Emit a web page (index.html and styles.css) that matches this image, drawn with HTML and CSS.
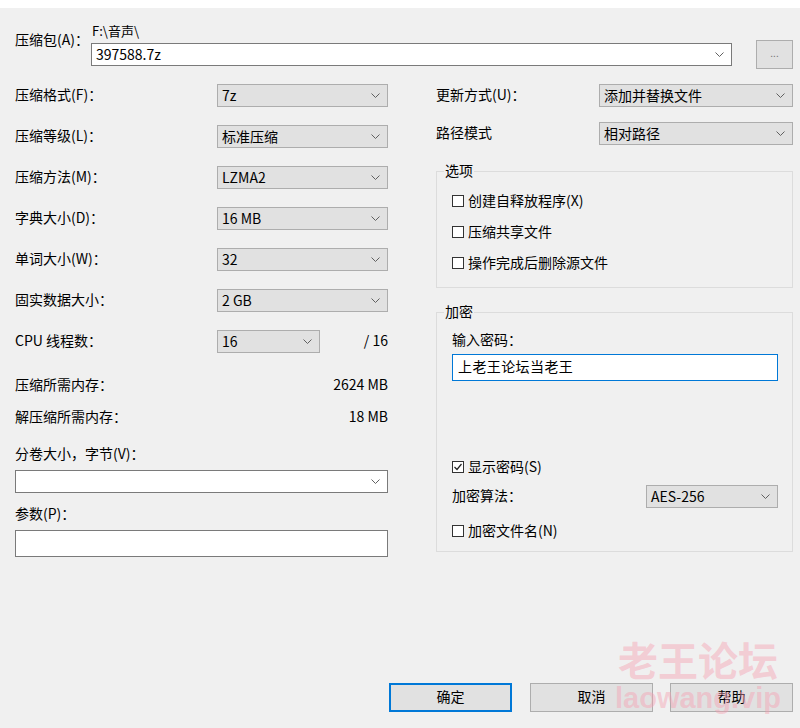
FILE: index.html
```html
<!DOCTYPE html>
<html lang="zh">
<head>
<meta charset="utf-8">
<title>添加到压缩包</title>
<link rel="stylesheet" href="styles.css">
</head>
<body>
<div class="strip"></div>
<main class="dialog">
  <div class="archive">
    <div class="archive-label">压缩包(A)：</div>
    <div class="archive-field">
      <div class="path">F:\音声\</div>
      <div class="combo white archive-combo"><span>397588.7z</span><svg class="chev" viewBox="0 0 9 5"><path d="M0.5 0.5 L4.5 4.5 L8.5 0.5"/></svg></div>
    </div>
    <div class="browse">...</div>
  </div>

  <div class="columns">
    <div class="left">
      <div class="row"><span>压缩格式(F)：</span><div class="combo"><span>7z</span><svg class="chev" viewBox="0 0 9 5"><path d="M0.5 0.5 L4.5 4.5 L8.5 0.5"/></svg></div></div>
      <div class="row"><span>压缩等级(L)：</span><div class="combo"><span>标准压缩</span><svg class="chev" viewBox="0 0 9 5"><path d="M0.5 0.5 L4.5 4.5 L8.5 0.5"/></svg></div></div>
      <div class="row"><span>压缩方法(M)：</span><div class="combo"><span>LZMA2</span><svg class="chev" viewBox="0 0 9 5"><path d="M0.5 0.5 L4.5 4.5 L8.5 0.5"/></svg></div></div>
      <div class="row"><span>字典大小(D)：</span><div class="combo"><span>16 MB</span><svg class="chev" viewBox="0 0 9 5"><path d="M0.5 0.5 L4.5 4.5 L8.5 0.5"/></svg></div></div>
      <div class="row"><span>单词大小(W)：</span><div class="combo"><span>32</span><svg class="chev" viewBox="0 0 9 5"><path d="M0.5 0.5 L4.5 4.5 L8.5 0.5"/></svg></div></div>
      <div class="row"><span>固实数据大小：</span><div class="combo"><span>2 GB</span><svg class="chev" viewBox="0 0 9 5"><path d="M0.5 0.5 L4.5 4.5 L8.5 0.5"/></svg></div></div>
      <div class="row cpu-row"><span>CPU 线程数：</span><div class="combo"><span>16</span><svg class="chev" viewBox="0 0 9 5"><path d="M0.5 0.5 L4.5 4.5 L8.5 0.5"/></svg></div><span class="cpu-max">/ 16</span></div>

      <div class="mem mem-first"><span>压缩所需内存：</span><span>2624 MB</span></div>
      <div class="mem mem-second"><span>解压缩所需内存：</span><span>18 MB</span></div>

      <div class="field-label split-label">分卷大小，字节(V)：</div>
      <div class="combo white full"><span></span><svg class="chev" viewBox="0 0 9 5"><path d="M0.5 0.5 L4.5 4.5 L8.5 0.5"/></svg></div>
      <div class="field-label param-label">参数(P)：</div>
      <div class="textbox"></div>
    </div>

    <div class="right">
      <div class="rrow"><span>更新方式(U)：</span><div class="combo"><span>添加并替换文件</span><svg class="chev" viewBox="0 0 9 5"><path d="M0.5 0.5 L4.5 4.5 L8.5 0.5"/></svg></div></div>
      <div class="rrow rrow-second"><span>路径模式</span><div class="combo"><span>相对路径</span><svg class="chev" viewBox="0 0 9 5"><path d="M0.5 0.5 L4.5 4.5 L8.5 0.5"/></svg></div></div>

      <fieldset class="group options">
        <legend>选项</legend>
        <div class="check"><span class="box"></span><span>创建自释放程序(X)</span></div>
        <div class="check"><span class="box"></span><span>压缩共享文件</span></div>
        <div class="check"><span class="box"></span><span>操作完成后删除源文件</span></div>
      </fieldset>

      <fieldset class="group encrypt">
        <legend>加密</legend>
        <div class="pw-label">输入密码：</div>
        <div class="password">上老王论坛当老王</div>
        <div class="check show-pw"><span class="box"><svg viewBox="0 0 10 10"><path d="M1.5 5 L4 7.5 L8.5 2"/></svg></span><span>显示密码(S)</span></div>
        <div class="algo"><span>加密算法：</span><div class="combo"><span>AES-256</span><svg class="chev" viewBox="0 0 9 5"><path d="M0.5 0.5 L4.5 4.5 L8.5 0.5"/></svg></div></div>
        <div class="check enc-names"><span class="box"></span><span>加密文件名(N)</span></div>
      </fieldset>
    </div>
  </div>

  <div class="footer">
    <div class="btn default">确定</div>
    <div class="btn">取消</div>
    <div class="btn">帮助</div>
  </div>
</main>
<div class="watermark">
  <div class="wm-cn">老王论坛</div>
  <div class="wm-en">laowang.vip</div>
</div>
</body>
</html>
```

FILE: styles.css
```css
* { box-sizing: border-box; }

html, body {
  margin: 0;
  padding: 0;
}

body {
  width: 800px;
  height: 728px;
  background: #f0f0f0;
  font-family: "Noto Sans CJK SC", "Noto Sans", sans-serif;
  font-size: 14px;
  line-height: 20px;
  color: #000;
  display: flex;
  flex-direction: column;
  position: relative;
  overflow: hidden;
}

.strip {
  height: 8px;
  background: #fff;
  flex: none;
}

.dialog {
  flex: 1;
  display: flex;
  flex-direction: column;
  padding: 14px 7px 16px 15px;
}

/* archive row */
.archive {
  display: flex;
  align-items: flex-start;
}

.archive-label {
  width: 76px;
  margin-top: 7px;
}

.archive-field {
  width: 641px;
}

.path {
  font-size: 13px;
  line-height: 18px;
  padding-left: 1px;
}

.archive-combo {
  margin-top: 3px;
}

.browse {
  margin-left: 24px;
  margin-top: 18px;
  width: 37px;
  height: 29px;
  background: #e1e1e1;
  border: 1px solid #adadad;
  color: #777;
  font-size: 10px;
  line-height: 24px;
  text-align: center;
}

/* combobox */
.combo {
  height: 23px;
  border: 1px solid #adadad;
  background: #e1e1e1;
  display: flex;
  align-items: center;
  justify-content: space-between;
  padding: 0 7px 2px 4px;
  line-height: 20px;
  white-space: nowrap;
}

.combo .chev {
  margin-top: 2px;
}

.combo.white {
  background: #fff;
  border-color: #7a7a7a;
}

.chev {
  width: 9px;
  height: 5px;
  flex: none;
  fill: none;
  stroke: #606060;
  stroke-width: 1;
}

/* columns */
.columns {
  display: flex;
  margin-top: 15px;
  gap: 48px;
}

.left {
  width: 373px;
  display: flex;
  flex-direction: column;
}

.right {
  width: 357px;
  display: flex;
  flex-direction: column;
}

.row {
  display: grid;
  grid-template-columns: 202px 171px;
  align-items: center;
  height: 23px;
}

.row > span,
.rrow > span,
.algo > span {
  padding-bottom: 3px;
}

.row + .row {
  margin-top: 18px;
}

.cpu-row {
  grid-template-columns: 202px 103px 1fr;
}

.cpu-max {
  text-align: right;
}

.mem {
  display: flex;
  justify-content: space-between;
}

.mem-first { margin-top: 21px; }
.mem-second { margin-top: 12px; }

.split-label { margin-top: 17px; margin-bottom: 7px; }
.param-label { margin-top: 10px; margin-bottom: 7px; }

.textbox {
  height: 27px;
  background: #fff;
  border: 1px solid #7a7a7a;
}

/* right column */
.rrow {
  display: grid;
  grid-template-columns: 163px 194px;
  align-items: center;
  height: 23px;
}

.rrow-second {
  margin-top: 15px;
}

.group {
  margin: 0;
  border: 1px solid #dcdcdc;
  padding: 10px 14px 14px 15px;
  min-width: 0;
}

.group legend {
  padding: 0 1px 2px;
  margin-left: -8px;
  line-height: 18px;
}

.options {
  margin-top: 16px;
}

.encrypt {
  margin-top: 14px;
  padding-top: 7px;
  padding-bottom: 10px;
}

.check {
  display: flex;
  align-items: center;
  height: 20px;
  gap: 4px;
}

.check > span:last-child {
  padding-bottom: 2px;
}

.options .check + .check {
  margin-top: 11px;
}

.box {
  width: 12px;
  height: 12px;
  border: 1px solid #333;
  background: #fff;
  flex: none;
  display: flex;
}

.box svg {
  width: 10px;
  height: 10px;
  fill: none;
  stroke: #222;
  stroke-width: 1.2;
}

.pw-label {
  line-height: 20px;
}

.password {
  margin-top: 5px;
  height: 27px;
  border: 1px solid #0078d7;
  background: #fff;
  padding: 0 5px;
  line-height: 22px;
  letter-spacing: 0.4px;
}

.show-pw {
  margin-top: 76px;
}

.algo {
  margin-top: 8px;
  height: 23px;
  display: flex;
  align-items: center;
  justify-content: space-between;
}

.algo .combo {
  width: 132px;
}

.enc-names {
  margin-top: 13px;
}

/* footer */
.footer {
  margin-top: auto;
  display: flex;
  justify-content: flex-end;
  gap: 17px;
}

.btn {
  width: 123px;
  height: 29px;
  border: 1px solid #adadad;
  background: #e1e1e1;
  text-align: center;
  line-height: 25px;
}

.btn.default {
  border: 2px solid #0078d7;
  line-height: 23px;
  margin-right: 1px;
}

/* watermark overlay */
.watermark {
  position: absolute;
  left: 610px;
  top: 634px;
  width: 176px;
  color: rgba(246, 160, 178, 0.45);
  font-family: "Noto Sans CJK SC", sans-serif;
  font-weight: 700;
  pointer-events: none;
  text-align: center;
}

.wm-cn {
  font-size: 40px;
  line-height: 50px;
}

.wm-en {
  font-family: "Liberation Sans", sans-serif;
  font-size: 29px;
  line-height: 30px;
  margin-top: -1px;
}
```
